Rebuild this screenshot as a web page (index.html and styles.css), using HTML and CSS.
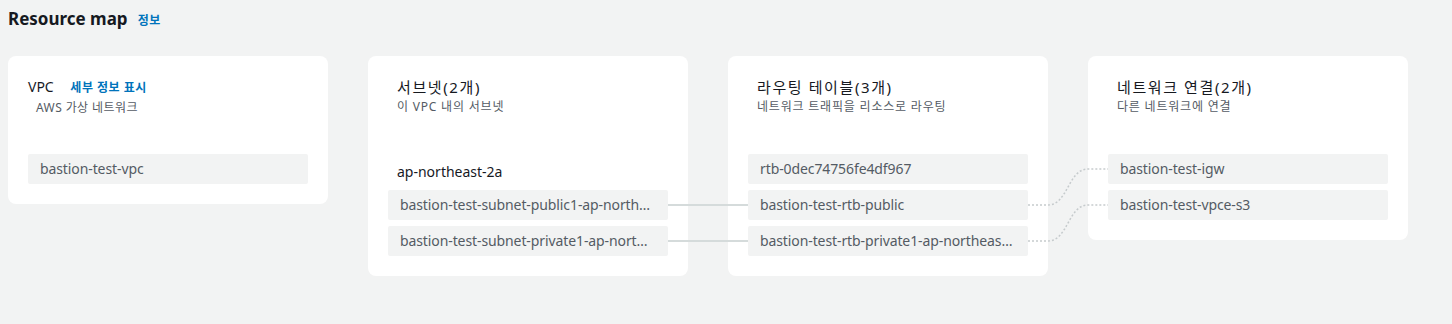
FILE: index.html
```html
<!DOCTYPE html>
<html lang="ko">
  <head>
    <meta charset="UTF-8" />
    <link rel="stylesheet" href="styles.css">
    <title>Resource map</title>
  </head>
  <body>
    <div class="page">
      <h2 class="heading">Resource map <a href="#" class="info">정보</a></h2>

      <div class="map">
        <div class="card">
          <div class="card-head">
            <div class="card-title">VPC <a href="#" class="detail">세부 정보 표시</a></div>
            <div class="card-sub indent">AWS 가상 네트워크</div>
          </div>
          <div class="items">
            <div class="item">bastion-test-vpc</div>
          </div>
        </div>

        <div class="card">
          <div class="card-head pad">
            <div class="card-title ko">서브넷(2개)</div>
            <div class="card-sub">이 VPC 내의 서브넷</div>
          </div>
          <div class="items">
            <div class="zone">ap-northeast-2a</div>
            <div class="item">bastion-test-subnet-public1-ap-northeast-2a</div>
            <div class="item">bastion-test-subnet-private1-ap-northeast-2a</div>
          </div>
        </div>

        <div class="card">
          <div class="card-head pad">
            <div class="card-title ko">라우팅 테이블(3개)</div>
            <div class="card-sub">네트워크 트래픽을 리소스로 라우팅</div>
          </div>
          <div class="items">
            <div class="item">rtb-0dec74756fe4df967</div>
            <div class="item">bastion-test-rtb-public</div>
            <div class="item">bastion-test-rtb-private1-ap-northeast-2a</div>
          </div>
        </div>

        <div class="card">
          <div class="card-head pad">
            <div class="card-title ko">네트워크 연결(2개)</div>
            <div class="card-sub">다른 네트워크에 연결</div>
          </div>
          <div class="items">
            <div class="item">bastion-test-igw</div>
            <div class="item">bastion-test-vpce-s3</div>
          </div>
        </div>

        <!-- connector lines between the columns -->
        <svg class="links" width="1400" height="220">
          <path class="solid" d="M660 149 H740" />
          <path class="solid" d="M660 185 H740" />
          <path class="dots" d="M1020 149 H1040 C1060 149 1060 113 1080 113 H1100" />
          <path class="dots" d="M1020 185 H1040 C1060 185 1060 149 1080 149 H1100" />
        </svg>
      </div>
    </div>
  </body>
</html>
```

FILE: styles.css
```css
* {
  margin: 0;
  padding: 0;
  box-sizing: border-box;
}

body {
  background-color: #f2f3f3;
  font-family: "Noto Sans", "Noto Sans CJK KR", sans-serif;
  color: #16191f;
}

.page {
  padding: 8px 8px 0;
}

.heading {
  display: flex;
  align-items: baseline;
  gap: 10px;
  height: 22px;
  font-size: 17px;
  line-height: 22px;
  font-weight: 700;
}

.info,
.detail {
  color: #0073bb;
  font-size: 12px;
  font-weight: 700;
  text-decoration: none;
}

.info {
  letter-spacing: 0.5px;
}

.map {
  position: relative;
  display: flex;
  align-items: flex-start;
  gap: 40px;
  margin-top: 26px;
}

.card {
  width: 320px;
  background: #fff;
  border-radius: 8px;
  padding: 20px;
}

.card-head {
  height: 78px;
}

.card-head.pad {
  padding-left: 9px;
}

.card-title {
  font-size: 14px;
  line-height: 22px;
}

.card-title.ko {
  font-size: 15px;
  letter-spacing: 1.6px;
}

.detail {
  margin-left: 13px;
  letter-spacing: 0.5px;
}

.card-sub {
  margin-top: 1px;
  font-size: 12px;
  line-height: 16px;
  letter-spacing: 0.8px;
  color: #545b64;
}

.card-sub.indent {
  padding-left: 8px;
  letter-spacing: 0.4px;
}

.items {
  display: flex;
  flex-direction: column;
  gap: 6px;
}

.zone {
  height: 30px;
  padding: 8px 0 0 9px;
  font-size: 14px;
  line-height: 20px;
}

.item {
  height: 30px;
  padding: 0 12px;
  background: #f2f3f3;
  border-radius: 2px;
  font-size: 14px;
  line-height: 30px;
  letter-spacing: -0.1px;
  color: #545b64;
  white-space: nowrap;
  overflow: hidden;
  text-overflow: ellipsis;
}

.links {
  position: absolute;
  left: 0;
  top: 0;
  pointer-events: none;
}

.links path {
  fill: none;
}

.solid {
  stroke: #d5dbdb;
  stroke-width: 2;
}

.dots {
  stroke: #c6cbcd;
  stroke-width: 1.5;
  stroke-dasharray: 2 2;
}
```
